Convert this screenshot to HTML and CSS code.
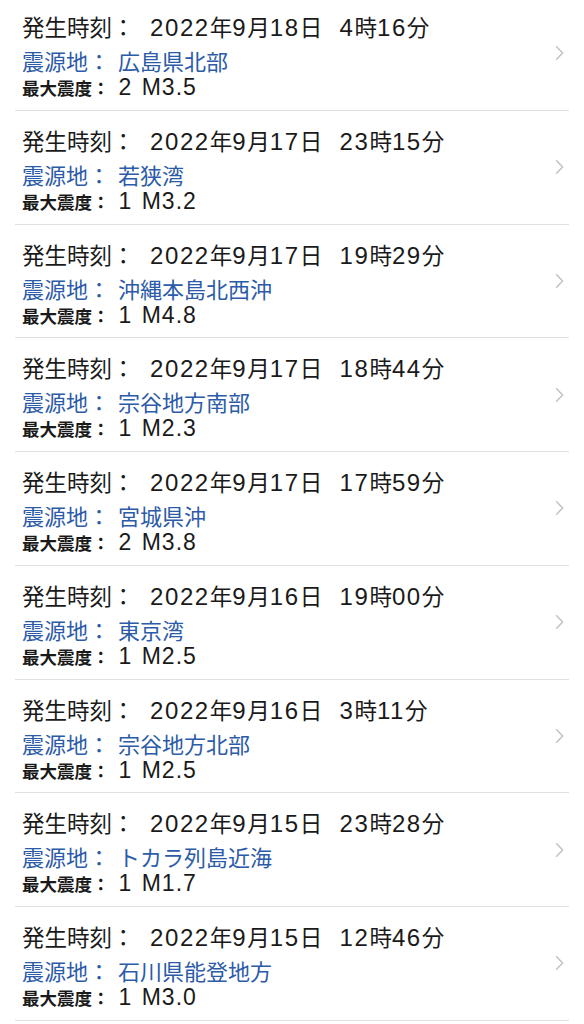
FILE: index.html
```html
<!DOCTYPE html>
<html lang="ja">
<head>
    <meta charset="UTF-8">
    <meta name="viewport" content="width=device-width, initial-scale=1.0">
    <title>地震情報</title>
    <link rel="stylesheet" href="styles.css">
</head>
<body>
    <ul class="quake-list" id="quakeList">
        <!-- rows are added by script.js -->
    </ul>
    <script src="script.js"></script>
</body>
</html>
```

FILE: styles.css
```css
body {
    font-family: "Liberation Sans", "Noto Sans CJK JP", sans-serif;
    margin: 0;
    padding: 0;
    background-color: #ffffff;
    color: #1a1a1a;
    overflow: hidden;
}

.quake-list {
    list-style: none;
    margin: -3px 0 0 0;
    padding: 0 15px;
}

.quake-list li {
    display: flex;
    align-items: center;
    height: 112.75px;
    border-bottom: 1px solid #e0e0e0;
    box-sizing: content-box;
}

.quake-info {
    flex-grow: 1;
    align-self: flex-start;
    padding: 17px 0 0 7px;
}

.quake-time {
    font-size: 22.5px;
    line-height: 28px;
    margin-bottom: 7px;
    white-space: nowrap;
    word-spacing: 11px;
}

.quake-time .label {
    margin-right: 15.5px;
}

.quake-time .num {
    font-size: 24px;
    letter-spacing: 1.6px;
    word-spacing: 0;
}

.quake-place {
    font-size: 22px;
    line-height: 26px;
    color: #2c5ba8;
}

.quake-place .label {
    margin-right: 8px;
}

.quake-scale {
    font-size: 17.5px;
    line-height: 22px;
    font-weight: bold;
}

.quake-scale .label {
    margin-right: 9px;
}

.quake-scale .value {
    font-size: 23px;
    font-weight: normal;
    letter-spacing: 1px;
    word-spacing: 2px;
}

.chevron {
    width: 9px;
    height: 16px;
    margin-right: 5px;
    flex-shrink: 0;
}
```

FILE: script.js
```js
const quakes = [
    { time: "2022年9月18日 4時16分", place: "広島県北部", scale: "2", mag: "M3.5" },
    { time: "2022年9月17日 23時15分", place: "若狭湾", scale: "1", mag: "M3.2" },
    { time: "2022年9月17日 19時29分", place: "沖縄本島北西沖", scale: "1", mag: "M4.8" },
    { time: "2022年9月17日 18時44分", place: "宗谷地方南部", scale: "1", mag: "M2.3" },
    { time: "2022年9月17日 17時59分", place: "宮城県沖", scale: "2", mag: "M3.8" },
    { time: "2022年9月16日 19時00分", place: "東京湾", scale: "1", mag: "M2.5" },
    { time: "2022年9月16日 3時11分", place: "宗谷地方北部", scale: "1", mag: "M2.5" },
    { time: "2022年9月15日 23時28分", place: "トカラ列島近海", scale: "1", mag: "M1.7" },
    { time: "2022年9月15日 12時46分", place: "石川県能登地方", scale: "1", mag: "M3.0" }
];

// 数字だけ少し大きく表示する
function bigDigits(text) {
    return text.replace(/(\d+)/g, '<span class="num">$1</span>');
}

const chevron = '<svg class="chevron" viewBox="0 0 9 16"><path d="M1.2 1.2 L7.6 8 L1.2 14.8" fill="none" stroke="#c2c2c6" stroke-width="1.5"/></svg>';

function renderQuakes() {
    const list = document.getElementById('quakeList');
    list.innerHTML = "";
    quakes.forEach(q => {
        const li = document.createElement('li');
        li.innerHTML =
            '<div class="quake-info">' +
                '<div class="quake-time"><span class="label">発生時刻：</span>' + bigDigits(q.time) + '</div>' +
                '<div class="quake-place"><span class="label">震源地：</span>' + q.place + '</div>' +
                '<div class="quake-scale"><span class="label">最大震度：</span>' +
                    '<span class="value">' + q.scale + ' ' + q.mag + '</span></div>' +
            '</div>' + chevron;
        list.appendChild(li);
    });
}

renderQuakes();
```
